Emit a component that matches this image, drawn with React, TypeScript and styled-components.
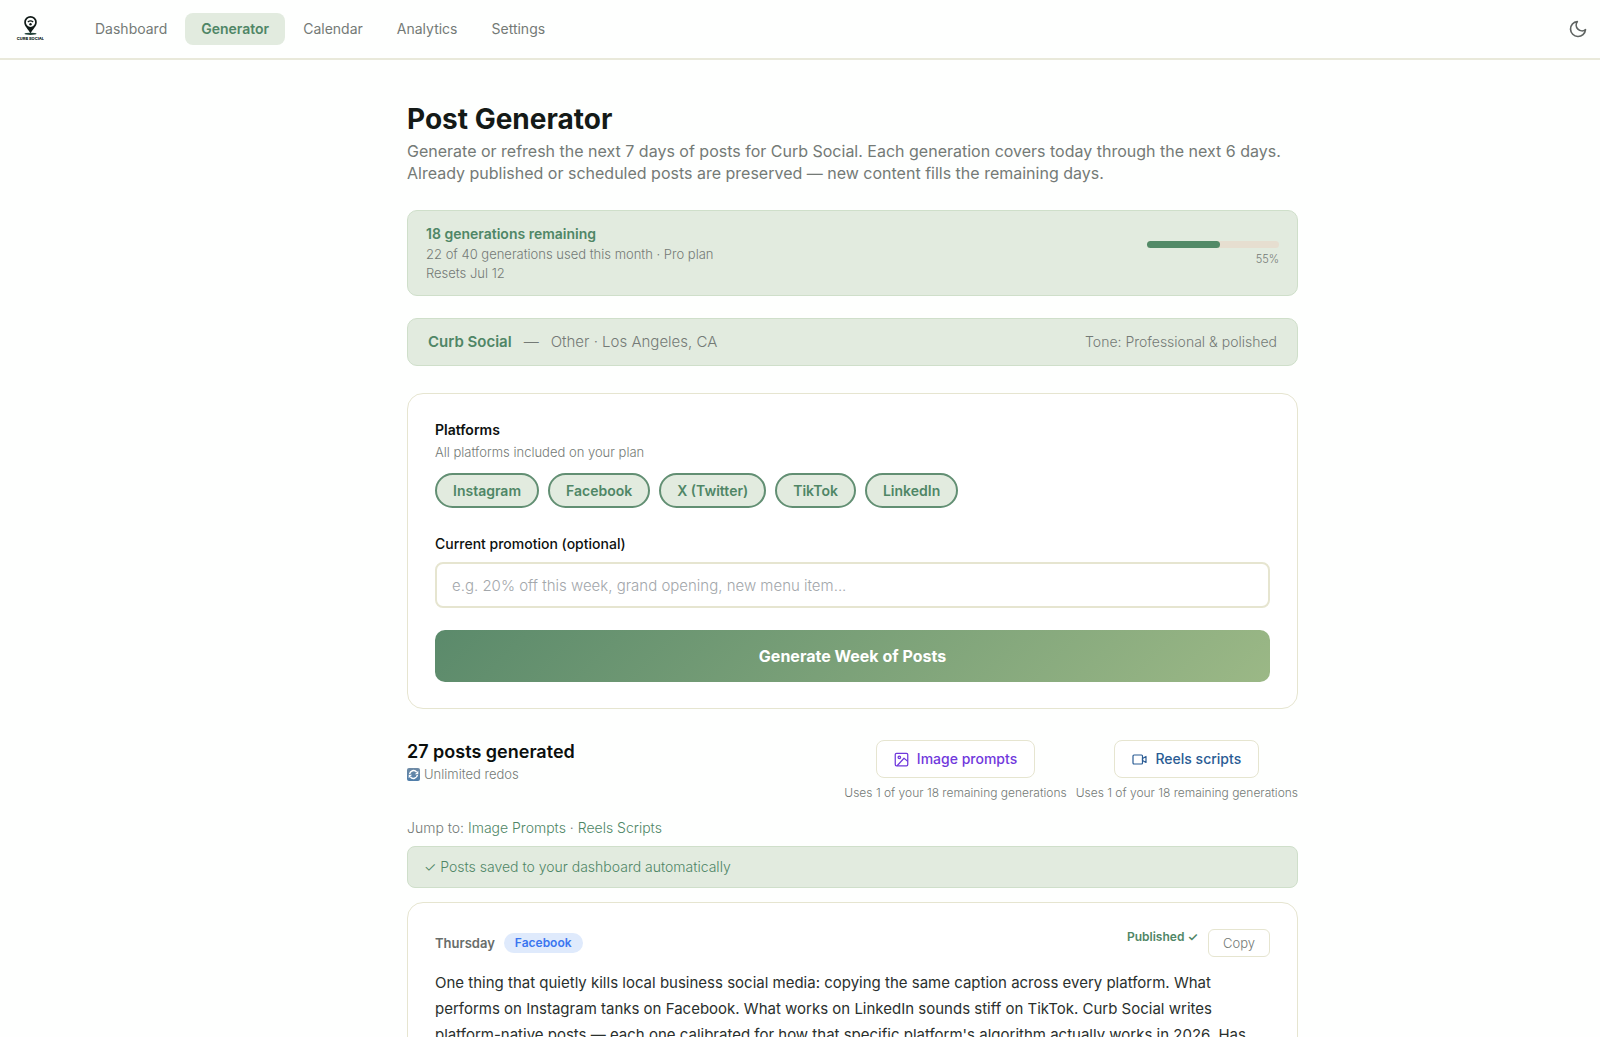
import React, { useState } from "react";
import styled, { createGlobalStyle, css } from "styled-components";

const color = {
  ink: "#141a17",
  muted: "#747a76",
  green: "#4f8666",
  pale: "#e2ebdf",
  paleBorder: "#cfdfca",
  line: "#e6e5d0",
};

const GlobalStyle = createGlobalStyle`
  *, *::before, *::after { box-sizing: border-box; }
  body {
    margin: 0;
    background: #fefffe;
    color: ${color.ink};
    font-family: Inter, "Liberation Sans", sans-serif;
    font-size: 14px;
    font-weight: 300;
  }
  h1, h2, h3, p, fieldset, legend { margin: 0; padding: 0; border: 0; }
  button, input { font: inherit; }
  a { color: inherit; text-decoration: none; }
`;

const Page = styled.div`
  display: flex;
  flex-direction: column;
  height: 100vh;
`;

const Header = styled.header`
  display: flex;
  flex: none;
  align-items: center;
  height: 60px;
  padding: 0 12px 0 16px;
  border-bottom: 2px solid #e9e9da;
`;

const Logo = styled.a`
  display: flex;
  flex-direction: column;
  align-items: center;
  width: 28px;
  margin-right: 35px;
`;

const Nav = styled.nav`
  display: flex;
  gap: 2px;
`;

const NavLink = styled.a<{ $active?: boolean }>`
  padding: 0 16px;
  border-radius: 8px;
  font-size: 14px;
  line-height: 32px;
  font-weight: 400;
  color: ${color.muted};
  ${(p) =>
    p.$active &&
    css`
      background: ${color.pale};
      color: ${color.green};
      font-weight: 600;
    `}
`;

const IconButton = styled.button`
  display: flex;
  margin-left: auto;
  padding: 0;
  border: 0;
  background: none;
  color: #5f6462;
  cursor: pointer;
`;

const Main = styled.main`
  display: grid;
  flex: 1;
  grid-template-columns: minmax(24px, 407fr) minmax(0, 891px) minmax(24px, 302fr);
  align-content: start;
  min-height: 0;
  overflow-y: auto;
  scrollbar-width: none;
`;

const Content = styled.div`
  grid-column: 2;
  padding: 41px 0;
`;

const Title = styled.h1`
  font-size: 28px;
  line-height: 36px;
  font-weight: 700;
`;

const Lead = styled.p`
  margin: 3px 0 26px;
  font-size: 16px;
  line-height: 22px;
  font-weight: 400;
  color: ${color.muted};
`;

const Panel = styled.section<{ $pad: string; $gap: number }>`
  display: flex;
  align-items: center;
  justify-content: space-between;
  padding: ${(p) => p.$pad};
  margin-bottom: ${(p) => p.$gap}px;
  border: 1px solid ${color.paleBorder};
  border-radius: 10px;
  background: ${color.pale};
  color: ${color.muted};
`;

const UsageText = styled.div`
  font-size: 13px;
  line-height: 19px;
`;

const UsageTitle = styled.h2`
  margin-bottom: 1px;
  font-size: 14px;
  line-height: 20px;
  font-weight: 600;
  color: ${color.green};
`;

const Meter = styled.div`
  width: 132px;
  font-size: 11px;
  line-height: 16px;
  text-align: right;
`;

const Track = styled.div`
  height: 7px;
  margin-bottom: 3px;
  border-radius: 4px;
  background: #e6ded0;
`;

const Fill = styled.div`
  height: 100%;
  border-radius: 4px;
  background: #528a67;
`;

const Business = styled.p`
  display: flex;
  gap: 12px;
  font-size: 15px;
  line-height: 20px;
`;

const BusinessName = styled.strong`
  font-weight: 600;
  color: ${color.green};
`;

const Tone = styled.p`
  font-size: 14px;
  line-height: 20px;
`;

const Card = styled.section`
  padding: 26px 27px;
  border: 1px solid ${color.line};
  border-radius: 16px;
  background: #fff;
`;

const FieldLabel = styled.label`
  display: block;
  font-size: 14px;
  line-height: 20px;
  font-weight: 500;
  color: #0d110f;
`;

const Legend = styled(FieldLabel).attrs({ as: "legend" })`
  font-weight: 600;
`;

const Hint = styled.p`
  font-size: 13px;
  line-height: 18px;
  color: ${color.muted};
`;

const PlatformHint = styled(Hint)`
  margin: 3px 0 12px;
`;

const PillRow = styled.div`
  display: flex;
  flex-wrap: wrap;
  gap: 9px;
  margin-bottom: 26px;
`;

const Pill = styled.button`
  height: 35px;
  padding: 0 16px;
  border: 2px solid #628f73;
  border-radius: 18px;
  background: ${color.pale};
  color: ${color.green};
  font-size: 14px;
  font-weight: 600;
  cursor: pointer;
`;

const TextInput = styled.input`
  display: block;
  width: 100%;
  height: 46px;
  margin: 8px 0 22px;
  padding: 0 15px;
  border: 2px solid ${color.line};
  border-radius: 8px;
  background: #fff;
  color: ${color.ink};
  font-size: 15px;
  outline: none;
  &::placeholder {
    color: #a3a7ab;
    opacity: 1;
  }
`;

const PrimaryButton = styled.button`
  display: block;
  width: 100%;
  height: 52px;
  border: 0;
  border-radius: 10px;
  background: linear-gradient(135deg, #5b8a6b, #9bb886);
  color: #fff;
  font-size: 16px;
  font-weight: 700;
  cursor: pointer;
`;

const ResultsHeader = styled.div`
  display: flex;
  justify-content: space-between;
  margin-top: 31px;
`;

const ResultsTitle = styled.h2`
  font-size: 18px;
  line-height: 24px;
  font-weight: 600;
  color: #0b0f0d;
`;

const Redos = styled(Hint)`
  display: flex;
  align-items: center;
  gap: 4px;
  line-height: 20px;
`;

const Actions = styled.div`
  display: flex;
  gap: 9px;
`;

const Action = styled.div`
  display: flex;
  flex-direction: column;
  align-items: center;
  gap: 7px;
  font-size: 12px;
  line-height: 16px;
  color: ${color.muted};
`;

const ActionButton = styled.button<{ $tint: string }>`
  display: flex;
  align-items: center;
  gap: 8px;
  height: 38px;
  padding: 0 17px;
  border: 1px solid ${color.line};
  border-radius: 8px;
  background: #fff;
  color: ${(p) => p.$tint};
  font-size: 14px;
  font-weight: 500;
  cursor: pointer;
`;

const Jump = styled.p`
  margin: 17px 0 8px;
  line-height: 20px;
  color: ${color.muted};
  a { color: ${color.green}; }
`;

const Saved = styled.p`
  margin-bottom: 14px;
  padding: 10px 16px;
  border: 1px solid ${color.paleBorder};
  border-radius: 8px;
  background: ${color.pale};
  color: ${color.green};
  line-height: 20px;
`;

const PostHead = styled.div`
  display: flex;
  align-items: center;
  gap: 9px;
  margin-bottom: 13px;
`;

const Day = styled.h3`
  font-size: 13px;
  line-height: 20px;
  font-weight: 600;
  color: #686d6a;
`;

const Badge = styled.span`
  padding: 0 11px;
  border-radius: 10px;
  background: #dfeafc;
  color: #3b76f0;
  font-size: 12px;
  line-height: 20px;
  font-weight: 600;
`;

const PostActions = styled.div`
  display: flex;
  align-items: flex-start;
  gap: 10px;
  margin-left: auto;
`;

const Published = styled.span`
  font-size: 12px;
  line-height: 16px;
  font-weight: 600;
  color: ${color.green};
`;

const CopyButton = styled.button`
  height: 28px;
  padding: 0 14px;
  border: 1px solid ${color.line};
  border-radius: 6px;
  background: #fff;
  color: ${color.muted};
  font-size: 13px;
  cursor: pointer;
`;

const PostBody = styled.p`
  font-size: 15px;
  line-height: 26px;
  font-weight: 400;
  color: #2a302d;
`;

const NoBreak = styled.span`
  white-space: nowrap;
`;

const LogoText = styled.text`
  font: 800 4px Inter, sans-serif;
`;

const LogoMark = () => (
  <svg width="28" height="26" viewBox="0 0 28 26" aria-label="Curb Social" role="img">
    <path
      fill="#101a17"
      fillRule="evenodd"
      d="M14.5 0a6.300 6.300 0 0 0-6.300 6.300c0 4.200 4.300 7 6.300 11.200 2-4.200 6.300-7 6.300-11.200a6.300 6.300 0 0 0-6.300-6.300zm0 1.700a4.600 4.600 0 1 1 0 9.200 4.600 4.600 0 0 1 0-9.200z"
    />
    <path d="M11.800 6q2.700-2.300 5.400 0" fill="none" stroke="#101a17" strokeWidth="1.200" />
    <circle cx="14.500" cy="8.200" r="1.200" fill="#101a17" />
    <ellipse cx="14.500" cy="17.800" rx="6" ry="1.100" fill="#24433a" />
    <LogoText x="14.500" y="23.500" textAnchor="middle" fill="#101a17">
      CURB SOCIAL
    </LogoText>
  </svg>
);

const Moon = () => (
  <svg width="20" height="20" viewBox="0 0 24 24" fill="none" stroke="currentColor" strokeWidth="2" strokeLinejoin="round" aria-hidden>
    <path d="M21 12.790A9 9 0 1 1 11.210 3 7 7 0 0 0 21 12.790z" />
  </svg>
);

const ImageIcon = () => (
  <svg width="15" height="15" viewBox="0 0 24 24" fill="none" stroke="currentColor" strokeWidth="2" strokeLinejoin="round" aria-hidden>
    <rect x="2" y="2" width="20" height="20" rx="2" />
    <circle cx="8.500" cy="8.500" r="2" />
    <path d="M22 15l-6-5L5 22" />
  </svg>
);

const VideoIcon = () => (
  <svg width="15" height="15" viewBox="0 0 15 15" fill="none" stroke="currentColor" strokeWidth="1.200" strokeLinejoin="round" aria-hidden>
    <rect x="1" y="3" width="9.500" height="9" rx="1" />
    <path d="M10.500 6.500L14 4.500v6l-3.500-2z" />
  </svg>
);

const RedoIcon = () => (
  <svg width="13" height="13" viewBox="0 0 13 13" aria-hidden>
    <defs>
      <linearGradient id="redo" x1="0" y1="0" x2="0" y2="1">
        <stop offset="0" stopColor="#6f8ba5" />
        <stop offset="1" stopColor="#4f7eaa" />
      </linearGradient>
    </defs>
    <rect width="13" height="13" rx="2" fill="url(#redo)" />
    <g fill="none" stroke="#fff" strokeWidth="1.500">
      <path d="M2.600 6a4 4 0 0 1 7-2" />
      <path d="M10.400 7a4 4 0 0 1-7 2" />
    </g>
    <path d="M11.300 2.800v3.400H7.900zM1.700 10.200V6.800h3.400z" fill="#fff" />
  </svg>
);

const navItems = ["Dashboard", "Generator", "Calendar", "Analytics", "Settings"];
const platforms = ["Instagram", "Facebook", "X (Twitter)", "TikTok", "LinkedIn"];
const used = 22;
const limit = 40;

export default function App() {
  const [promotion, setPromotion] = useState("");
  const percent = Math.round((used / limit) * 100);

  return (
    <Page>
      <GlobalStyle />
      <Header>
        <Logo href="#">
          <LogoMark />
        </Logo>
        <Nav>
          {navItems.map((item) => (
            <NavLink key={item} href="#" $active={item === "Generator"}>
              {item}
            </NavLink>
          ))}
        </Nav>
        <IconButton type="button" aria-label="Toggle dark mode">
          <Moon />
        </IconButton>
      </Header>

      <Main>
        <Content>
          <Title>Post Generator</Title>
          <Lead>
            Generate or refresh the next 7 days of posts for Curb Social. Each generation covers today through the
            next 6 days. Already published or scheduled posts are preserved — new content fills the remaining days.
          </Lead>

          <Panel $pad="13px 18px 12px" $gap={22}>
            <UsageText>
              <UsageTitle>{limit - used} generations remaining</UsageTitle>
              <p>
                {used} of {limit} generations used this month · Pro plan
              </p>
              <p>Resets Jul 12</p>
            </UsageText>
            <Meter>
              <Track>
                <Fill style={{ width: `${percent}%` }} />
              </Track>
              {percent}%
            </Meter>
          </Panel>

          <Panel $pad="13px 20px" $gap={27}>
            <Business>
              <BusinessName>Curb Social</BusinessName>
              <span>—</span>
              <span>Other · Los Angeles, CA</span>
            </Business>
            <Tone>Tone: Professional &amp; polished</Tone>
          </Panel>

          <Card>
            <fieldset>
              <Legend>Platforms</Legend>
              <PlatformHint>All platforms included on your plan</PlatformHint>
              <PillRow>
                {platforms.map((name) => (
                  <Pill key={name} type="button">
                    {name}
                  </Pill>
                ))}
              </PillRow>
            </fieldset>
            <FieldLabel htmlFor="promotion">Current promotion (optional)</FieldLabel>
            <TextInput
              id="promotion"
              value={promotion}
              onChange={(e) => setPromotion(e.target.value)}
              placeholder="e.g. 20% off this week, grand opening, new menu item..."
            />
            <PrimaryButton type="button">Generate Week of Posts</PrimaryButton>
          </Card>

          <ResultsHeader>
            <div>
              <ResultsTitle>27 posts generated</ResultsTitle>
              <Redos>
                <RedoIcon />
                Unlimited redos
              </Redos>
            </div>
            <Actions>
              <Action>
                <ActionButton type="button" $tint="#7038dc">
                  <ImageIcon />
                  Image prompts
                </ActionButton>
                <span>Uses 1 of your 18 remaining generations</span>
              </Action>
              <Action>
                <ActionButton type="button" $tint="#2a5c94">
                  <VideoIcon />
                  Reels scripts
                </ActionButton>
                <span>Uses 1 of your 18 remaining generations</span>
              </Action>
            </Actions>
          </ResultsHeader>

          <Jump>
            Jump to: <a href="#image-prompts">Image Prompts</a> · <a href="#reels-scripts">Reels Scripts</a>
          </Jump>
          <Saved>✓ Posts saved to your dashboard automatically</Saved>

          <Card as="article">
            <PostHead>
              <Day>Thursday</Day>
              <Badge>Facebook</Badge>
              <PostActions>
                <Published>Published ✓</Published>
                <CopyButton type="button">Copy</CopyButton>
              </PostActions>
            </PostHead>
            <PostBody>
              One thing that quietly kills local business social media: copying the same caption across every
              platform. What performs on Instagram tanks on Facebook. What works on LinkedIn sounds stiff on TikTok.
              Curb Social writes <NoBreak>platform-native</NoBreak> posts — each one calibrated for how that specific
              platform's algorithm actually works in 2026. Has
            </PostBody>
          </Card>
        </Content>
      </Main>
    </Page>
  );
}
